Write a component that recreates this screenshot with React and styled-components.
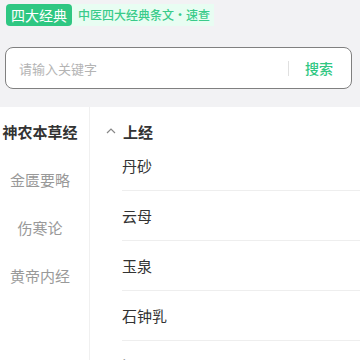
import React, { useState } from 'react';
import styled, { createGlobalStyle } from 'styled-components';

const books = ['神农本草经', '金匮要略', '伤寒论', '黄帝内经'];
const herbs = ['丹砂', '云母', '玉泉', '石钟乳', '涅石'];

export default function App() {
  const [active, setActive] = useState(0);
  return (
    <Page>
      <GlobalStyle />
      <Header>
        <Badge>四大经典</Badge>
        <Tagline>中医四大经典条文·速查</Tagline>
      </Header>
      <SearchBox>
        <SearchInput placeholder="请输入关键字" />
        <Divider />
        <SearchButton>搜索</SearchButton>
      </SearchBox>
      <Content>
        <Sidebar>
          {books.map((b, i) => (
            <NavItem key={b} active={i === active} onClick={() => setActive(i)}>
              {b}
            </NavItem>
          ))}
        </Sidebar>
        <Main>
          <SectionTitle>
            <svg width="10" height="6" viewBox="0 0 10 6">
              <polyline
                points="1,5 5,1 9,5"
                fill="none"
                stroke="#888"
                strokeWidth="1.2"
              />
            </svg>
            上经
          </SectionTitle>
          {herbs.map(h => (
            <Row key={h}>{h}</Row>
          ))}
        </Main>
      </Content>
    </Page>
  );
}

const GlobalStyle = createGlobalStyle`
  html, body {
    margin: 0;
    padding: 0;
    background: #f2f2f4;
    font-family: "Noto Sans CJK SC", "Noto Sans", sans-serif;
  }
  body {
    overflow: hidden;
  }
`;

const Page = styled.div`
  width: 360px;
  height: 360px;
  display: flex;
  flex-direction: column;
  overflow: hidden;
`;

const Header = styled.div`
  flex-shrink: 0;
  display: flex;
  align-items: center;
  padding: 4px 0 0 6px;
  height: 22px;
`;

const Badge = styled.div`
  background: #2fc782;
  color: #fff;
  font-size: 14px;
  height: 22px;
  line-height: 22px;
  padding: 0 5px;
  border-radius: 4px;
`;

const Tagline = styled.div`
  background: #e8fdf2;
  color: #3acb8a;
  font-size: 12px;
  font-weight: 500;
  height: 22px;
  line-height: 22px;
  padding: 0 4px 0 6px;
`;

const SearchBox = styled.div`
  flex-shrink: 0;
  margin: 21px 8px 0 5px;
  height: 40px;
  display: flex;
  align-items: center;
  background: #fff;
  border: 1px solid #808080;
  border-radius: 8px;
`;

const SearchInput = styled.input`
  flex: 1;
  min-width: 0;
  border: none;
  outline: none;
  background: transparent;
  font-family: inherit;
  font-size: 13px;
  padding: 0 0 0 13px;
  color: #333;
  &::placeholder {
    color: #b4b4b4;
  }
`;

const Divider = styled.div`
  width: 1px;
  height: 15px;
  background: #e0e0e0;
`;

const SearchButton = styled.div`
  color: #2fc782;
  font-size: 14px;
  font-weight: 500;
  padding: 0 18px 0 16px;
`;

const Content = styled.div`
  margin-top: 18px;
  flex: 1;
  min-height: 0;
  display: flex;
  background: #fff;
`;

const Sidebar = styled.div`
  width: 90px;
  box-sizing: border-box;
  padding-right: 9px;
  border-right: 1px solid #f0f0f0;
`;

const NavItem = styled.div`
  height: 48px;
  display: flex;
  align-items: center;
  justify-content: center;
  font-size: 15px;
  font-weight: ${({ active }) => (active ? 700 : 400)};
  color: ${({ active }) => (active ? '#333' : '#999')};
`;

const Main = styled.div`
  flex: 1;
  padding-left: 16px;
`;

const SectionTitle = styled.div`
  display: flex;
  align-items: center;
  gap: 7px;
  padding-top: 14px;
  height: 20px;
  font-size: 15px;
  font-weight: 700;
  color: #333;
`;

const Row = styled.div`
  margin-left: 16px;
  height: 50px;
  box-sizing: border-box;
  display: flex;
  align-items: center;
  font-size: 15px;
  color: #333;
  border-bottom: 1px solid #eeeeee;
`;
